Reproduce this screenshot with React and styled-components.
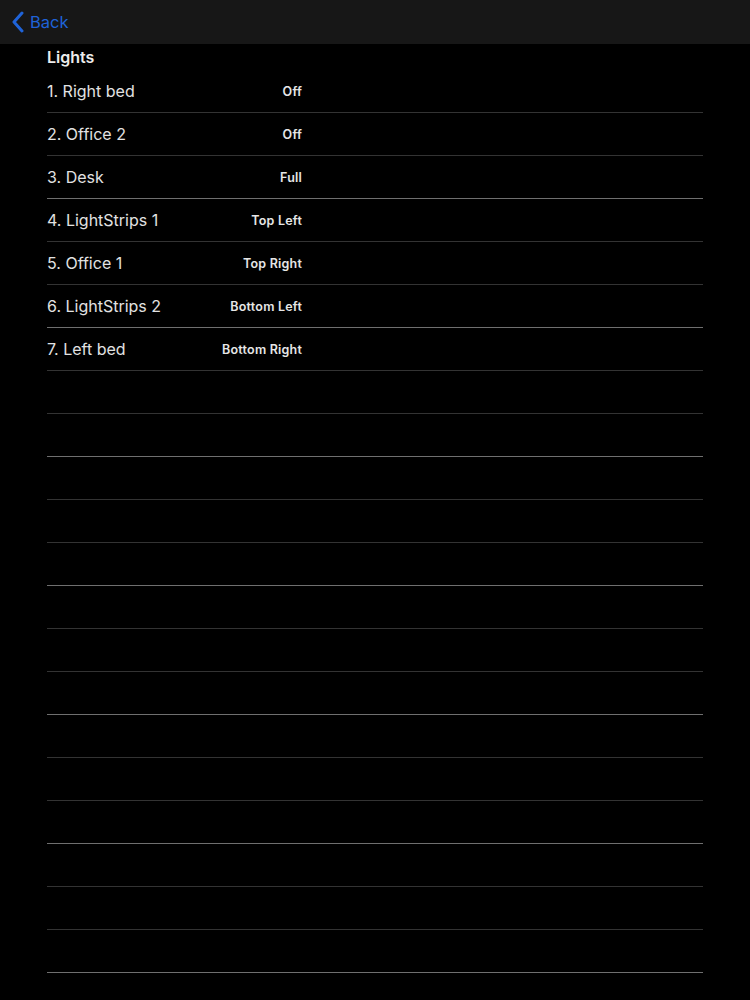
import React from 'react'
import styled, { createGlobalStyle } from 'styled-components'

const rows = [
  ['1. Right bed', 'Off'],
  ['2. Office 2', 'Off'],
  ['3. Desk', 'Full'],
  ['4. LightStrips 1', 'Top Left'],
  ['5. Office 1', 'Top Right'],
  ['6. LightStrips 2', 'Bottom Left'],
  ['7. Left bed', 'Bottom Right'],
]

const TOTAL = 21

function App() {
  const items = []
  for (let i = 0; i < TOTAL; i++) {
    const r = rows[i] || ['', '']
    items.push(
      <Row key={i} $bright={i % 3 === 2}>
        <Name>{r[0]}</Name>
        <Value>{r[1]}</Value>
      </Row>
    )
  }
  return (
    <>
      <Global />
      <Page>
        <NavBar>
          <BackButton>
            <svg width="14" height="22" viewBox="0 0 14 22">
              <path d="M11 2 L3 11 L11 20" fill="none" stroke="#1f63d8" strokeWidth="3" strokeLinecap="round" strokeLinejoin="round" />
            </svg>
            Back
          </BackButton>
        </NavBar>
        <List>
          <Title>Lights</Title>
          {items}
        </List>
      </Page>
    </>
  )
}

export default App

const Global = createGlobalStyle`
    body{
        margin:0;
        background:#000;
        font-family:"Inter","Liberation Sans",sans-serif;
    }
`

const Page = styled.div`
    width:750px;
    height:1000px;
    background:#000;
    overflow:hidden;
`

const NavBar = styled.div`
    height:44px;
    background:#171717;
    display:flex;
    align-items:center;
    padding-left:11px;
`

const BackButton = styled.div`
    display:flex;
    align-items:center;
    gap:5px;
    color:#1f63d8;
    font-size:16.5px;
`

const List = styled.div`
    margin:0 47px;
    display:flex;
    flex-direction:column;
`

const Title = styled.div`
    height:26px;
    display:flex;
    align-items:center;
    color:#ececec;
    font-size:16px;
    font-weight:600;
`

const Row = styled.div`
    height:42px;
    display:flex;
    align-items:center;
    border-bottom:1px solid ${p => p.$bright ? '#6f6f6f' : '#333'};
`

const Name = styled.div`
    width:160px;
    color:#e2e2e2;
    font-size:16px;
`

const Value = styled.div`
    width:95px;
    text-align:right;
    color:#e6e6e6;
    font-size:12.5px;
    font-weight:600;
    letter-spacing:0.2px;
`
